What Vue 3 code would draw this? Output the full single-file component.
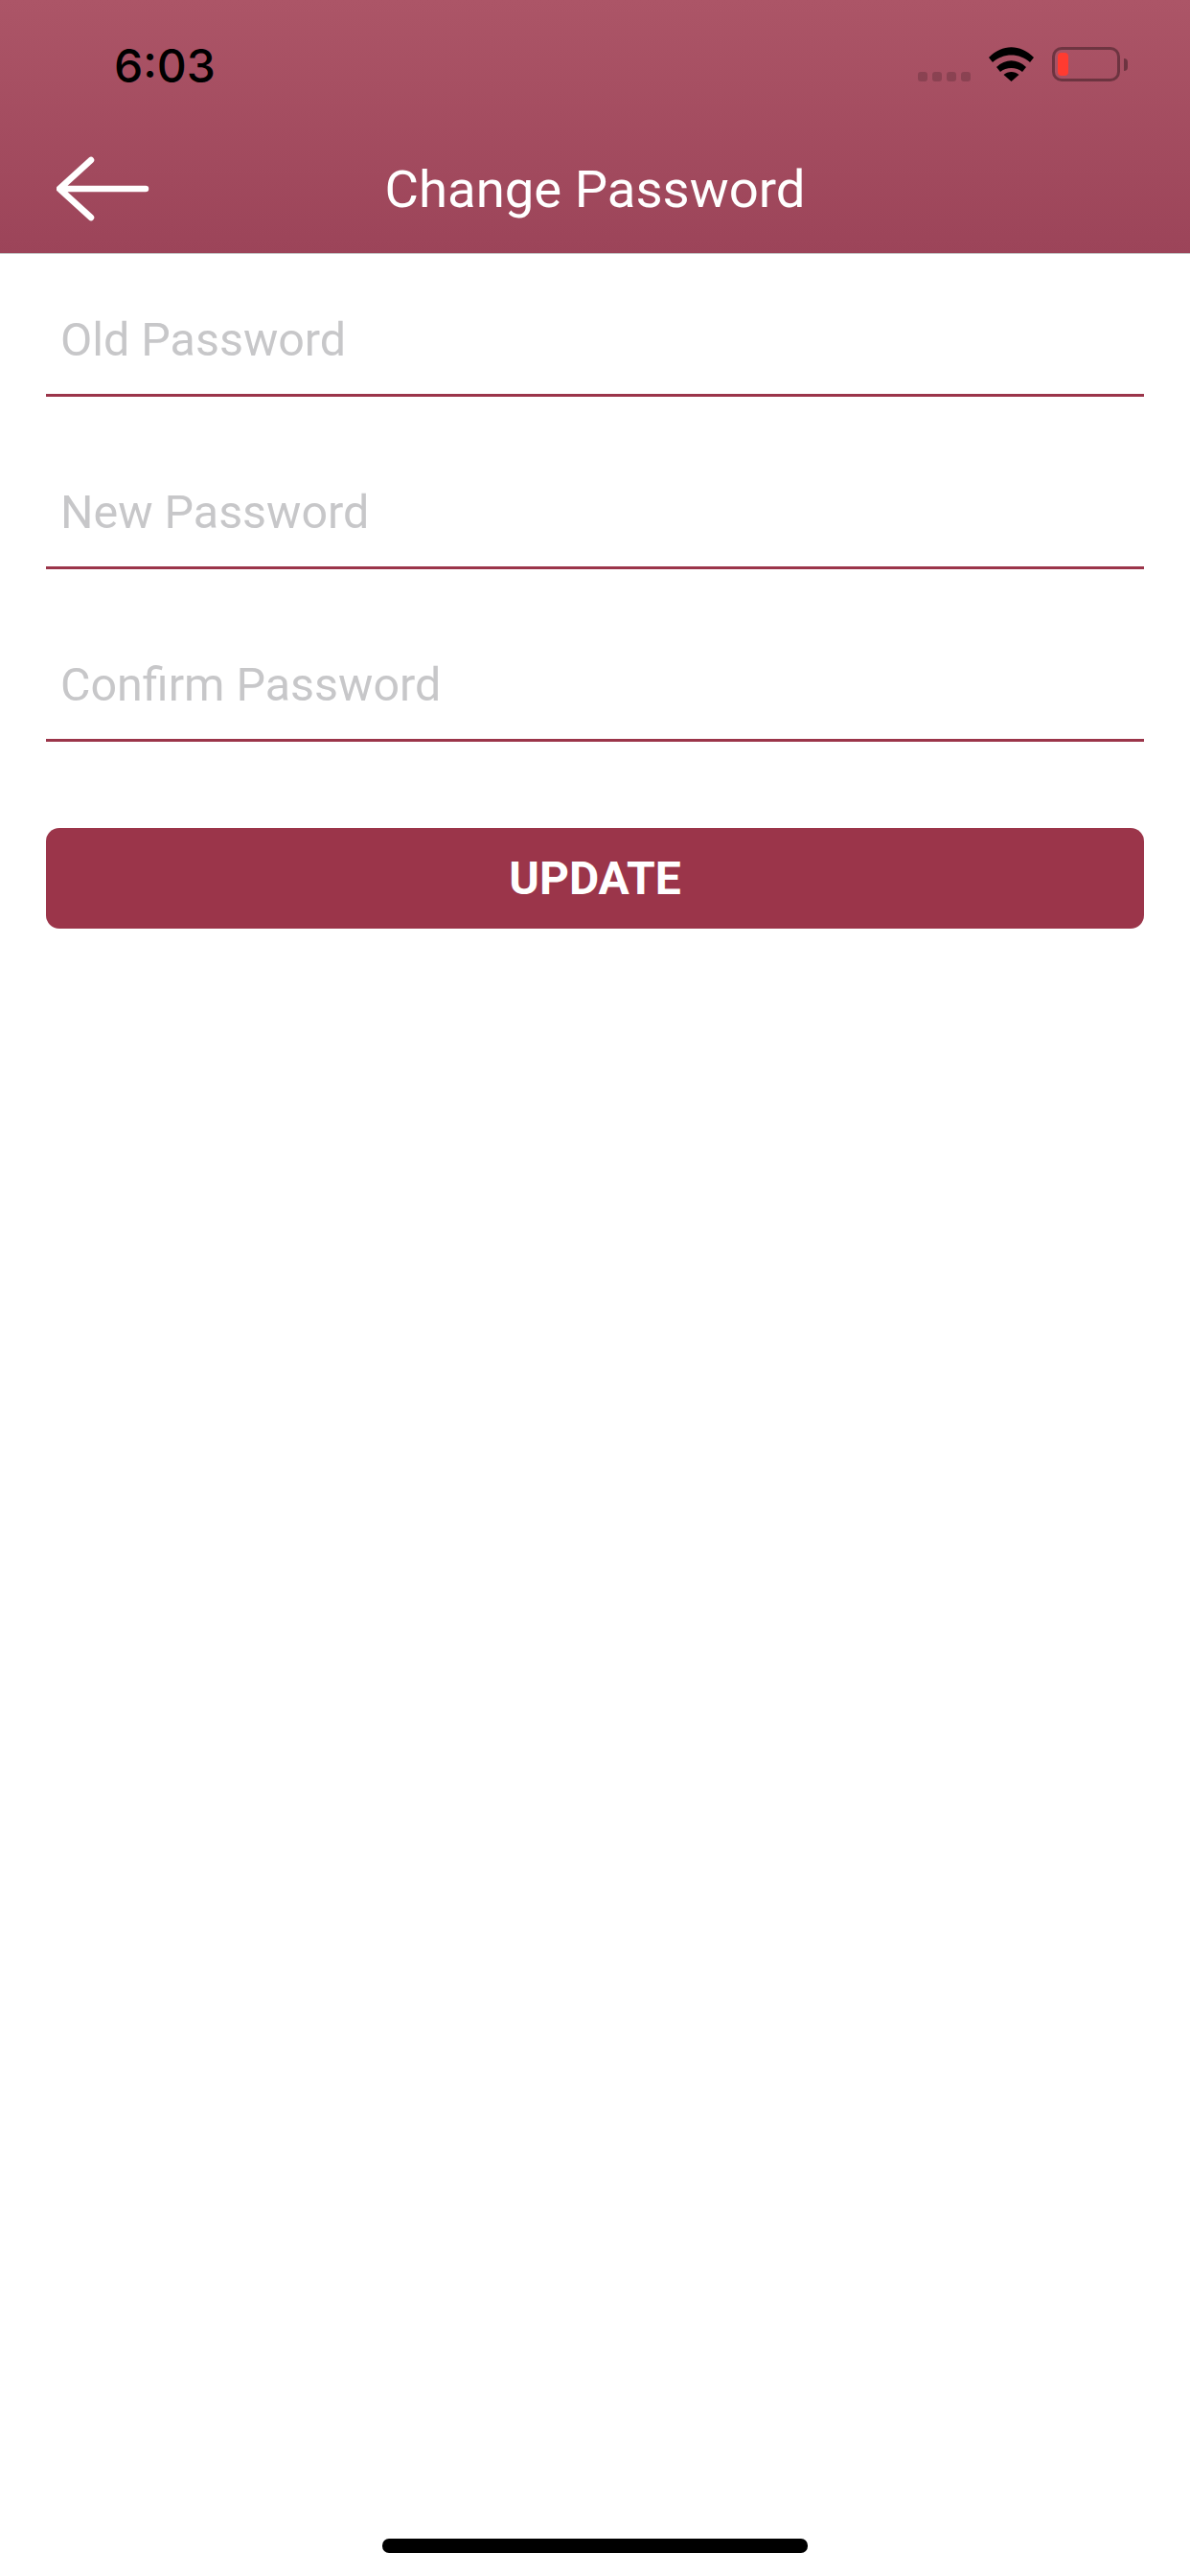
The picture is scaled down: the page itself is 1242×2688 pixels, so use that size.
<script setup>
import { ref } from 'vue'

const fields = ref([
  { id: 'old', placeholder: 'Old Password', value: '' },
  { id: 'new', placeholder: 'New Password', value: '' },
  { id: 'confirm', placeholder: 'Confirm Password', value: '' }
])
</script>

<template>
  <div class="page">
    <header class="header">
      <div class="status">
        <span class="time">6:03</span>
        <div class="status-icons">
          <div class="signal">
            <i v-for="n in 4" :key="n"></i>
          </div>
          <svg class="wifi" width="47" height="36" viewBox="0 0 47 36">
            <path d="M0 11 L4 16 C15 6 32 6 43 16 L47 11 C33 -3.5 14 -3.5 0 11 Z" />
            <path d="M8 21 L12 26 C18 20.500 29 20.500 35 26 L39 21 C29.500 12 17.500 12 8 21 Z" />
            <path d="M15.500 29 L23.500 36 L31.500 29 C27 25 20 25 15.500 29 Z" />
          </svg>
          <div class="battery">
            <div class="battery-body"><div class="battery-level"></div></div>
            <div class="battery-nub"></div>
          </div>
        </div>
      </div>
      <div class="nav">
        <svg class="back" width="100" height="70" viewBox="0 0 100 70">
          <path d="M36 5 L3 35 L36 65 M3 35 H93" fill="none" stroke="#fff" stroke-width="6.500" stroke-linecap="round" stroke-linejoin="round" />
        </svg>
        <h1 class="title">Change Password</h1>
      </div>
    </header>

    <form class="form" @submit.prevent>
      <div v-for="field in fields" :key="field.id" class="field">
        <input v-model="field.value" type="password" :placeholder="field.placeholder" />
      </div>
      <button class="update" type="submit">UPDATE</button>
    </form>

    <div class="home-bar"></div>
  </div>
</template>

<style scoped>
.page {
  display: flex;
  flex-direction: column;
  height: 2688px;
  background: #fff;
  font-family: Roboto, "Liberation Sans", sans-serif;
  overflow: hidden;
}

.header {
  height: 264px;
  background: linear-gradient(#ac5567, #9c4459);
  border-bottom: 1px solid #c4c4c4;
  position: relative;
}

.status {
  display: flex;
  justify-content: space-between;
  height: 132px;
  padding: 45px 65px 0 119px;
  box-sizing: border-box;
}

.time {
  font-family: Inter, "Liberation Sans", sans-serif;
  font-weight: 500;
  font-size: 48px;
  line-height: 48px;
  color: #000;
}

.status-icons {
  display: flex;
  align-items: flex-start;
  padding-top: 4px;
}

.signal {
  display: flex;
  gap: 5px;
  margin-top: 26px;
  margin-right: 19px;
}

.signal i {
  display: block;
  width: 10px;
  height: 10px;
  border-radius: 3px;
  background: rgba(0, 0, 0, 0.17);
}

.wifi {
  fill: #000;
  margin-right: 19px;
}

.battery {
  display: flex;
  align-items: center;
}

.battery-body {
  width: 71px;
  height: 36px;
  box-sizing: border-box;
  border: 3px solid rgba(0, 0, 0, 0.35);
  border-radius: 10px;
  padding: 3px;
}

.battery-level {
  width: 11px;
  height: 100%;
  background: #ff3b30;
  border-radius: 4px;
}

.battery-nub {
  width: 4px;
  height: 13px;
  margin-left: 4px;
  background: rgba(0, 0, 0, 0.35);
  border-radius: 0 6px 6px 0;
}

.nav {
  display: flex;
  align-items: center;
  justify-content: center;
  height: 132px;
  position: relative;
}

.back {
  position: absolute;
  left: 59px;
  top: 30px;
}

.title {
  margin: -2px 0 0;
  font-weight: 400;
  font-size: 54.5px;
  line-height: 66px;
  color: #fff;
}

.form {
  display: flex;
  flex-direction: column;
  padding: 0 48px;
}

.field {
  height: 180px;
  display: flex;
  align-items: flex-end;
  border-bottom: 3px solid #9b354a;
  box-sizing: border-box;
}

.field:first-child {
  height: 149px;
}

.field input {
  width: 100%;
  height: 100px;
  margin-bottom: 7px;
  padding: 0 0 0 15px;
  border: 0;
  outline: 0;
  background: transparent;
  font-family: inherit;
  font-size: 48.4px;
  color: #333;
}

.field input::placeholder {
  color: #c7c7c9;
  opacity: 1;
}

.update {
  height: 105px;
  margin-top: 90px;
  border: 0;
  border-radius: 14px;
  background: #9b354a;
  color: #fff;
  font-family: inherit;
  font-weight: 700;
  font-size: 48px;
}

.home-bar {
  width: 444px;
  height: 15px;
  margin: auto auto 24px;
  border-radius: 7px;
  background: #000;
}
</style>
